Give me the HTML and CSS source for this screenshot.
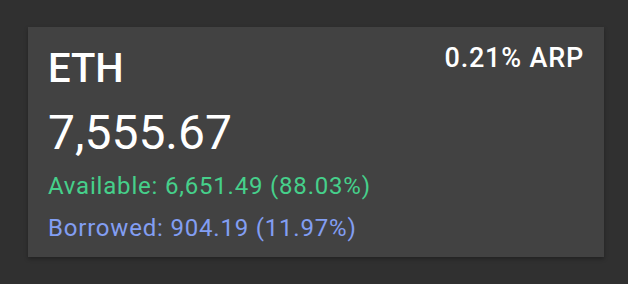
FILE: index.html
```html
<!DOCTYPE html>
<html lang="en">
<head>
    <meta charset="UTF-8">
    <meta name="viewport" content="width=device-width, initial-scale=1.0">
    <title>ETH</title>
    <link rel="stylesheet" href="styles.css">
</head>
<body>
    <div class="asset-card">
        <div class="card-header">
            <h2 class="asset-name">ETH</h2>
            <span class="asset-rate">0.21% ARP</span>
        </div>
        <div class="asset-total">7,555.67</div>
        <p class="asset-line available">Available: 6,651.49 (88.03%)</p>
        <p class="asset-line borrowed">Borrowed: 904.19 (11.97%)</p>
    </div>
</body>
</html>
```

FILE: styles.css
```css
body {
    margin: 0;
    padding: 27px 24px 27px 28px;
    font-family: Roboto, "Liberation Sans", sans-serif;
    background-color: #303030;
    color: #fff;
}
.asset-card {
    background-color: #424242;
    padding: 18px 20px 14px 20px;
    height: 230px;
    box-sizing: border-box;
    box-shadow: 0 2px 4px rgba(0, 0, 0, 0.3);
}
.card-header {
    display: flex;
    justify-content: space-between;
    align-items: flex-start;
}
.asset-name {
    margin: 0;
    font-size: 40px;
    font-weight: 500;
    line-height: 48px;
}
.asset-rate {
    font-size: 27px;
    font-weight: 500;
    line-height: 27px;
    letter-spacing: 0.8px;
}
.asset-total {
    margin-top: 11px;
    font-size: 48px;
    line-height: 1.2;
}
.asset-line {
    margin: 6px 0 0;
    font-size: 24px;
    line-height: 36px;
    letter-spacing: 0.8px;
}
.available {
    color: #46d08b;
}
.borrowed {
    color: #829ef2;
}
```
